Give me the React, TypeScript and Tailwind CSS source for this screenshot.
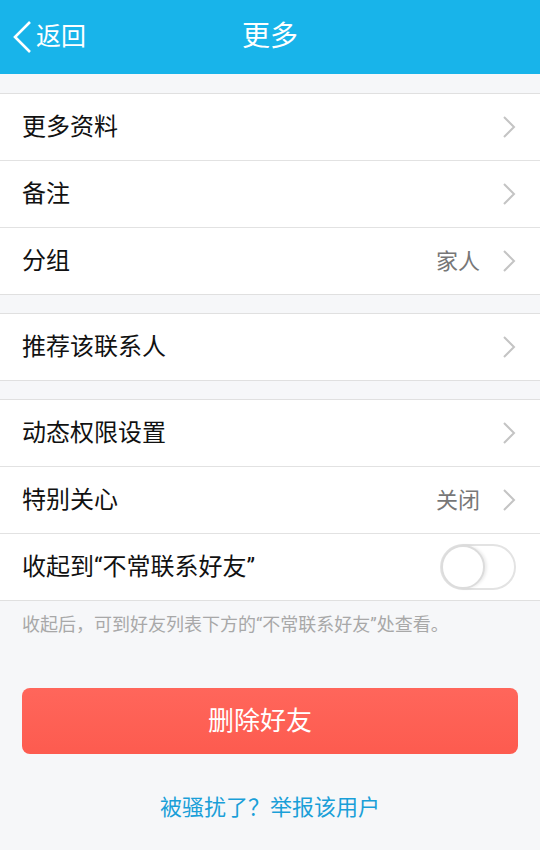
import { Fragment } from 'react'

type Row = {
  label: string
  value?: string
  toggle?: boolean
}

const sections: Row[][] = [
  [{ label: '更多资料' }, { label: '备注' }, { label: '分组', value: '家人' }],
  [{ label: '推荐该联系人' }],
  [
    { label: '动态权限设置' },
    { label: '特别关心', value: '关闭' },
    { label: '收起到“不常联系好友”', toggle: true },
  ],
]

// latin font first so the curly quotes stay narrow
const font = 'font-["Roboto","Noto_Sans_CJK_SC",sans-serif]'

function Chevron() {
  return (
    <svg width="14" height="24" viewBox="0 0 14 24" className="ml-[22px]">
      <path d="M2 2 L12 12 L2 22" fill="none" stroke="#c4c4c4" strokeWidth="2" />
    </svg>
  )
}

function Toggle() {
  return (
    <div className="relative h-[46px] w-[76px] rounded-full border-2 border-[#e3e3e3] bg-white">
      <div className="absolute -left-[1px] -top-[1px] h-[44px] w-[44px] rounded-full border-2 border-[#dcdcdc] bg-white shadow-[2px_0_3px_rgba(0,0,0,0.08)]" />
    </div>
  )
}

function SettingRow({ row }: { row: Row }) {
  return (
    <div className="flex h-[66px] items-center justify-between pl-[22px] pr-[24px]">
      <span className="text-[24px] text-[#111]">{row.label}</span>
      {row.toggle ? (
        <Toggle />
      ) : (
        <div className="flex items-center">
          {row.value && <span className="text-[22px] text-[#777]">{row.value}</span>}
          <Chevron />
        </div>
      )}
    </div>
  )
}

export default function App() {
  return (
    <div className={`flex h-[850px] w-[540px] flex-col bg-[#f6f7f9] ${font}`}>
      <header className="relative flex h-[74px] items-center justify-center bg-[#18b4ea] text-white">
        <div className="absolute left-[12px] top-0 flex h-full items-center">
          <svg width="22" height="34" viewBox="0 0 22 34">
            <path d="M18 2 L3 17 L18 32" fill="none" stroke="white" strokeWidth="2.6" />
          </svg>
          <span className="ml-[2px] text-[25px]">返回</span>
        </div>
        <h1 className="text-[28px]">更多</h1>
      </header>

      {sections.map((rows, i) => (
        <div
          key={i}
          className={`${i === 0 ? 'mt-[19px]' : 'mt-[18px]'} border-y border-[#e0e0e0] bg-white`}
        >
          {rows.map((row, j) => (
            <Fragment key={row.label}>
              {j > 0 && <div className="h-px bg-[#e2e2e2]" />}
              <SettingRow row={row} />
            </Fragment>
          ))}
        </div>
      ))}

      <p className="mt-[10px] pl-[22px] text-[18px] text-[#a8a8a8]">
        收起后，可到好友列表下方的“不常联系好友”处查看。
      </p>

      <button className="mx-[22px] mt-[50px] h-[66px] rounded-[8px] bg-gradient-to-b from-[#ff665b] to-[#fd5b4f] pr-[20px] text-[26px] text-white">
        删除好友
      </button>

      <a className="mt-[37px] text-center text-[22px] text-[#1a9fd8]">被骚扰了？举报该用户</a>
    </div>
  )
}
